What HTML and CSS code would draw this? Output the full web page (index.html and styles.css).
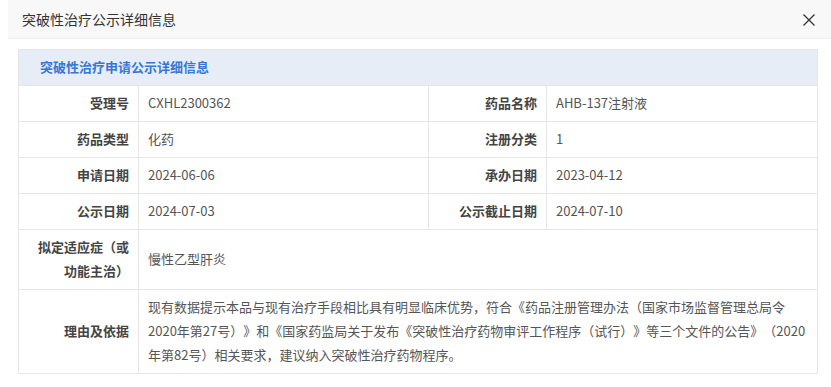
FILE: index.html
```html
<!DOCTYPE html>
<html lang="zh-CN">
<head>
<meta charset="utf-8">
<title>突破性治疗公示详细信息</title>
<link rel="stylesheet" href="styles.css">
</head>
<body>
<div class="dialog">
  <div class="dialog-header">
    <span class="dialog-title">突破性治疗公示详细信息</span>
    <span class="close" aria-label="关闭">
      <svg width="12" height="12" viewBox="0 0 12 12"><path d="M0.5 0.5 L11.5 11.5 M11.5 0.5 L0.5 11.5" stroke="#333" stroke-width="1.3" fill="none"/></svg>
    </span>
  </div>
  <div class="dialog-body">
    <table class="info">
      <colgroup>
        <col class="c-label1">
        <col class="c-val1">
        <col class="c-label2">
        <col class="c-val2">
      </colgroup>
      <thead>
        <tr><th colspan="4" class="caption">突破性治疗申请公示详细信息</th></tr>
      </thead>
      <tbody>
        <tr>
          <td class="label">受理号</td><td class="value">CXHL2300362</td>
          <td class="label">药品名称</td><td class="value">AHB-137注射液</td>
        </tr>
        <tr>
          <td class="label">药品类型</td><td class="value">化药</td>
          <td class="label">注册分类</td><td class="value">1</td>
        </tr>
        <tr>
          <td class="label">申请日期</td><td class="value">2024-06-06</td>
          <td class="label">承办日期</td><td class="value">2023-04-12</td>
        </tr>
        <tr>
          <td class="label">公示日期</td><td class="value">2024-07-03</td>
          <td class="label">公示截止日期</td><td class="value">2024-07-10</td>
        </tr>
        <tr>
          <td class="label">拟定适应症（或功能主治）</td>
          <td class="value" colspan="3">慢性乙型肝炎</td>
        </tr>
        <tr>
          <td class="label">理由及依据</td>
          <td class="value" colspan="3">现有数据提示本品与现有治疗手段相比具有明显临床优势，符合《药品注册管理办法（国家市场监督管理总局令2020年第27号）》和《国家药监局关于发布《突破性治疗药物审评工作程序（试行）》等三个文件的公告》（2020年第82号）相关要求，建议纳入突破性治疗药物程序。</td>
        </tr>
      </tbody>
    </table>
  </div>
</div>
</body>
</html>
```

FILE: styles.css
```css
html, body {
  margin: 0;
  padding: 0;
  background: #fff;
  font-family: "Noto Sans CJK SC", "Noto Sans", sans-serif;
  color: #333;
}

.dialog {
  width: 831px;
}

.dialog-header {
  margin-left: 8px;
  height: 38px;
  background: #f8f8f8;
  border-bottom: 1px solid #eeeeee;
  display: flex;
  align-items: center;
  justify-content: space-between;
  padding: 0 16px 0 14px;
}

.dialog-title {
  font-size: 14px;
  color: #333;
}

.close {
  display: flex;
  align-items: center;
  margin-top: 1px;
}

.dialog-body {
  padding: 10px 14px 0 18px;
}

.info {
  width: 799px;
  border-collapse: collapse;
  table-layout: fixed;
  font-size: 13px;
  text-spacing-trim: space-all;
}

.c-label1 { width: 120px; }
.c-val1 { width: 290px; }
.c-label2 { width: 118px; }
.c-val2 { width: 271px; }

.info th,
.info td {
  border: 1px solid #e6e6e6;
  line-height: 24px;
  padding: 5px 9px 6px 9px;
  vertical-align: middle;
}

.caption {
  background: #e7edf7;
  color: #3876d6;
  font-weight: bold;
  text-align: left;
  padding-left: 21px !important;
  height: 24px;
}

.label {
  text-align: right;
  font-weight: bold;
  color: #444;
}

.value {
  text-align: left;
  color: #555;
}
```
